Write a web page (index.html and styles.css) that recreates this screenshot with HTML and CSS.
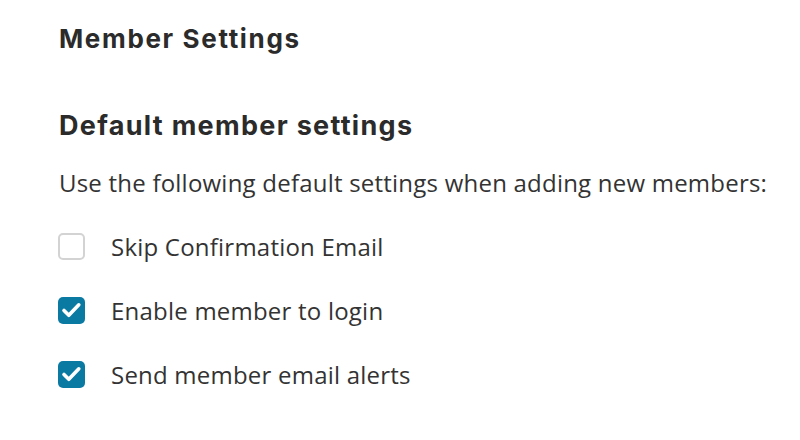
FILE: index.html
```html
<!DOCTYPE html>
<html lang="en">
<head>
<meta charset="utf-8">
<title>Member Settings</title>
<link rel="stylesheet" href="styles.css">
</head>
<body>
<main class="page">
  <h1 class="title">Member Settings</h1>
  <section class="section">
    <h2 class="subtitle">Default member settings</h2>
    <p class="desc">Use the following default settings when adding new members:</p>
    <ul class="options">
      <li class="option">
        <span class="box"></span>
        <span class="label">Skip Confirmation Email</span>
      </li>
      <li class="option">
        <span class="box checked"><svg viewBox="0 0 27 27" width="27" height="27"><path d="M6 13.5 L10.8 18.3 L20.8 7.8" fill="none" stroke="#fff" stroke-width="3.6" stroke-linecap="round" stroke-linejoin="round"/></svg></span>
        <span class="label">Enable member to login</span>
      </li>
      <li class="option">
        <span class="box checked"><svg viewBox="0 0 27 27" width="27" height="27"><path d="M6 13.5 L10.8 18.3 L20.8 7.8" fill="none" stroke="#fff" stroke-width="3.6" stroke-linecap="round" stroke-linejoin="round"/></svg></span>
        <span class="label">Send member email alerts</span>
      </li>
    </ul>
  </section>
</main>
</body>
</html>
```

FILE: styles.css
```css
html, body {
  margin: 0;
  padding: 0;
  background: #ffffff;
}
.page {
  padding: 22px 0 0 59px;
  color: #333333;
}
.title {
  margin: 0;
  font-family: "Inter", "Noto Sans", sans-serif;
  font-weight: 700;
  font-size: 26px;
  letter-spacing: 1.65px;
  line-height: 34px;
  color: #2b2b2b;
}
.section {
  margin-top: 52px;
}
.subtitle {
  margin: 0;
  font-family: "Inter", "Noto Sans", sans-serif;
  font-weight: 700;
  font-size: 27px;
  letter-spacing: 1.3px;
  line-height: 36px;
  color: #2b2b2b;
}
.desc {
  margin: 23px 0 0 0;
  font-family: "Open Sans", "Noto Sans", sans-serif;
  font-size: 24px;
  letter-spacing: 0.22px;
  line-height: 32px;
  color: #333333;
}
.options {
  list-style: none;
  margin: 34px 0 0 -1px;
  padding: 0;
  display: flex;
  flex-direction: column;
  gap: 37px;
}
.option {
  display: flex;
  align-items: center;
  gap: 26px;
  height: 27px;
}
.box {
  width: 27px;
  height: 27px;
  box-sizing: border-box;
  border: 2px solid #d3d3d3;
  border-radius: 5px;
  background: #ffffff;
  flex: none;
  display: flex;
}
.box.checked {
  border: none;
  background: #0b7aa3;
}
.box svg {
  width: 27px;
  height: 27px;
}
.label {
  font-family: "Open Sans", "Noto Sans", sans-serif;
  font-size: 24px;
  letter-spacing: 0.22px;
  line-height: 32px;
  color: #333333;
}
```
